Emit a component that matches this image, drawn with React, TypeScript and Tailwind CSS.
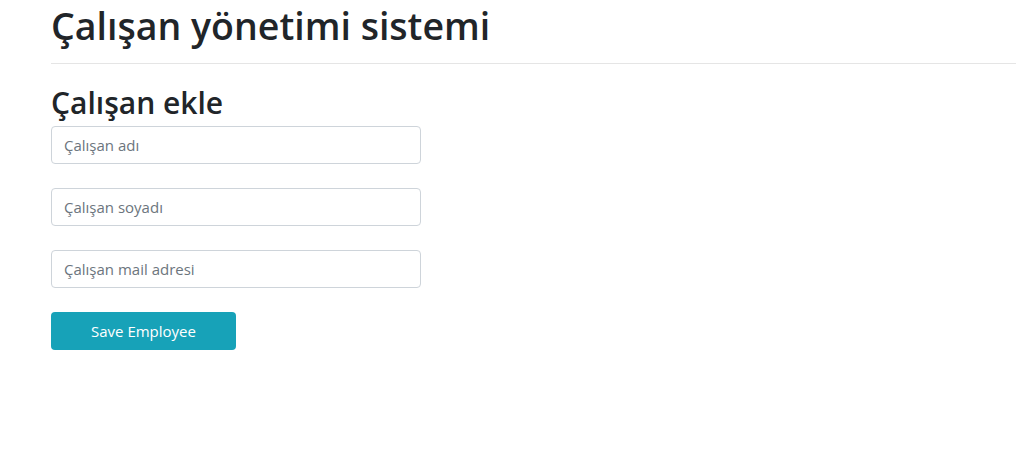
export default function App() {
  return (
    <div className="min-h-[465px] bg-white pl-[51px] text-[#212529] font-['Open_Sans',sans-serif]">
      <h1 className="pt-[4px] text-[37.5px] leading-[44px] font-semibold">Çalışan yönetimi sistemi</h1>
      <hr className="mt-[15px] border-t border-[#e5e5e5]" />
      <h2 className="mt-[20px] text-[30px] leading-[38px] font-semibold">Çalışan ekle</h2>
      <form className="mt-[4px] flex flex-col gap-6 w-[370px]">
        <Field placeholder="Çalışan adı" />
        <Field placeholder="Çalışan soyadı" />
        <Field placeholder="Çalışan mail adresi" />
        <button
          type="button"
          className="w-[185px] h-[38px] rounded bg-[#17a2b8] text-white text-[15px]"
        >
          Save Employee
        </button>
      </form>
    </div>
  );
}

const Field = ({ placeholder }: { placeholder: string }) => {
  return (
    <input
      placeholder={placeholder}
      className="h-[38px] w-full rounded border border-[#ced4da] px-3 text-[15px] placeholder:text-[#6c757d] outline-none"
    />
  );
};
